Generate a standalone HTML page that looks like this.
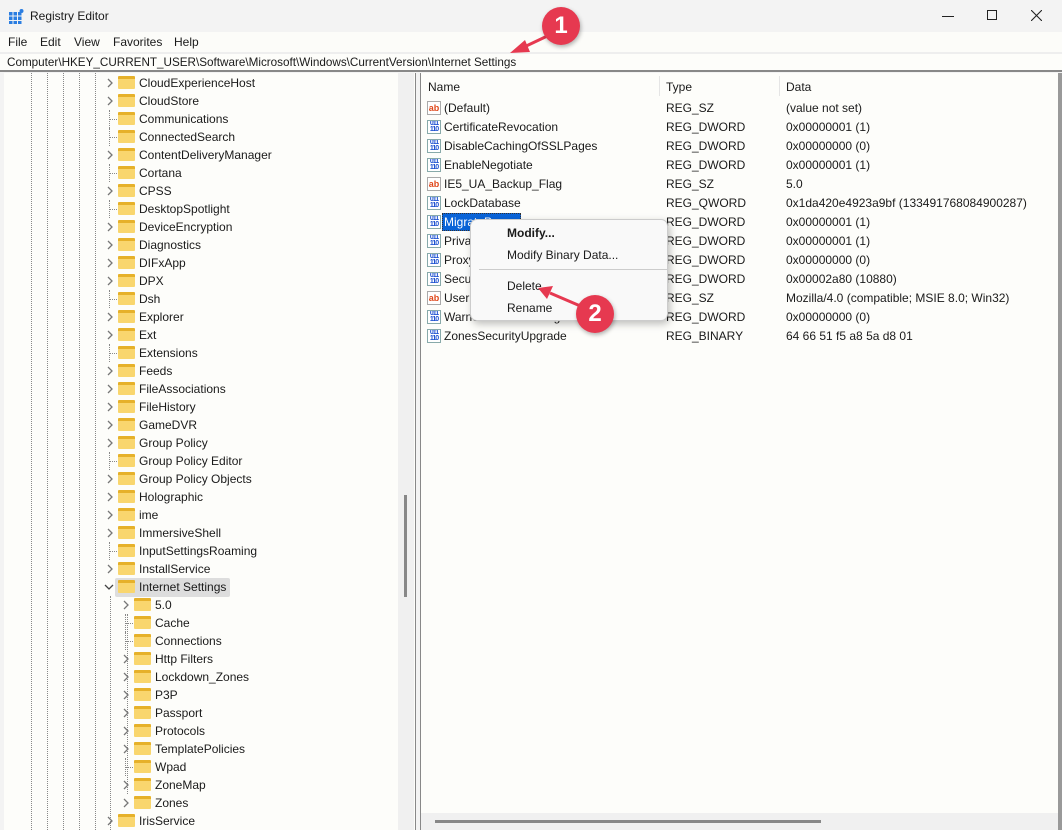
<!DOCTYPE html><html><head><meta charset="utf-8"><style>
*{margin:0;padding:0;box-sizing:border-box}
body{width:1062px;height:830px;overflow:hidden;background:#f3f3f3;font-family:"Liberation Sans",sans-serif;font-size:12px;color:#1a1a1a;position:relative}
.a{position:absolute;white-space:nowrap}
.r{position:absolute;height:18px;line-height:18px;white-space:nowrap}
.f{position:absolute;width:17px;height:13px;background:#f9d66e;border-top:3px solid #e6b12a;border-radius:1px}
.ch{position:absolute}
.dl{position:absolute;border-left:1px dotted #888}
.ic{position:absolute;width:14px;height:14px;border:1px solid #8aa;font-size:7px;line-height:6px;color:#1b4fd0;font-weight:bold;text-align:center;background:#fff;overflow:hidden;letter-spacing:-1px}
.ab{position:absolute;width:14px;height:14px;border:1px solid #aaa;background:#fff;color:#e0471a;font-size:9px;font-weight:bold;line-height:12px;text-align:center}
.badge{position:absolute;width:38px;height:38px;border-radius:50%;background:#e63950;color:#fff;font-weight:bold;font-size:24px;text-align:center;line-height:38px;box-shadow:1px 2px 4px rgba(0,0,0,.3)}
</style></head><body>
<div class="a" style="left:9px;top:9px;width:15px;height:15px">
<svg width="15" height="15"><g fill="#2a7de1"><rect x="0" y="3" width="3.5" height="3.5"/><rect x="4.5" y="3" width="3.5" height="3.5"/><rect x="9" y="3" width="3.5" height="3.5"/><rect x="0" y="7.5" width="3.5" height="3.5"/><rect x="4.5" y="7.5" width="3.5" height="3.5"/><rect x="9" y="7.5" width="3.5" height="3.5"/><rect x="0" y="12" width="3.5" height="3"/><rect x="4.5" y="12" width="3.5" height="3"/><rect x="9" y="12" width="3.5" height="3"/><circle cx="12.5" cy="2" r="2"/></g></svg></div>
<div class="a" style="left:30px;top:9px;font-size:12px">Registry Editor</div>
<div class="a" style="left:942px;top:16px;width:12px;border-top:1px solid #222"></div>
<div class="a" style="left:987px;top:10px;width:10px;height:10px;border:1px solid #222"></div>
<svg class="a" style="left:1031px;top:10px" width="11" height="11"><path d="M0 0L11 11M11 0L0 11" stroke="#222" stroke-width="1.1"/></svg>
<div class="a" style="left:0;top:32px;width:1062px;height:20px;background:#fcfcf9"></div>
<div class="a" style="left:8px;top:35px">File</div><div class="a" style="left:40px;top:35px">Edit</div><div class="a" style="left:74px;top:35px">View</div><div class="a" style="left:113px;top:35px">Favorites</div><div class="a" style="left:174px;top:35px">Help</div>
<div class="a" style="left:0;top:52px;width:1062px;height:20px;background:#fdfdfa;border-top:2px solid #eee;border-bottom:2px solid #888"></div>
<div class="a" style="left:7px;top:56px;font-size:11.7px">Computer\HKEY_CURRENT_USER\Software\Microsoft\Windows\CurrentVersion\Internet Settings</div>
<div class="a" style="left:4px;top:73px;width:411px;height:757px;background:#fdfdfa"></div>
<div class="a" style="left:398px;top:73px;width:16px;height:757px;background:#f0f0f0"></div>
<div class="a" style="left:404px;top:495px;width:3px;height:102px;background:#888"></div>
<div class="a" style="left:415px;top:73px;width:1px;height:757px;background:#888"></div>
<div class="a" style="left:420px;top:73px;width:1px;height:757px;background:#888"></div>
<div class="dl" style="left:31px;top:73px;height:757px"></div><div class="dl" style="left:47px;top:73px;height:757px"></div><div class="dl" style="left:63px;top:73px;height:757px"></div><div class="dl" style="left:79px;top:73px;height:757px"></div><div class="dl" style="left:95px;top:73px;height:757px"></div>
<div class="dl" style="left:110px;top:596px;height:234px"></div>
<div class="dl" style="left:127px;top:614px;height:180px"></div>
<div class="a" style="left:115px;top:578px;width:115px;height:19px;background:#ddd;border-radius:2px"></div>
<div id="tree"></div>
<div class="a" style="left:421px;top:73px;width:637px;height:757px;background:#fdfdfa"></div>
<div class="a" style="left:421px;top:813px;width:637px;height:17px;background:#f0f0f0"></div>
<div class="a" style="left:435px;top:820px;width:386px;height:3px;background:#888"></div>
<div class="a" style="left:1058px;top:73px;width:4px;height:757px;background:#999"></div>
<div class="a" style="left:659px;top:76px;width:1px;height:20px;background:#e5e5e5"></div>
<div class="a" style="left:779px;top:76px;width:1px;height:20px;background:#e5e5e5"></div>
<div class="a" style="left:428px;top:80px">Name</div><div class="a" style="left:666px;top:80px">Type</div><div class="a" style="left:786px;top:80px">Data</div>
<div class="a" style="left:442px;top:213px;width:79px;height:18px;background:#0a64d8;border:1px dotted #333"></div>
<div id="list"></div>
<div class="a" style="left:470px;top:219px;width:198px;height:102px;background:#f9f9f9;border:1px solid #ccc;border-radius:7px;box-shadow:2px 3px 8px rgba(0,0,0,.25)"></div>
<div class="a" style="left:507px;top:226px;font-weight:bold">Modify...</div>
<div class="a" style="left:507px;top:248px">Modify Binary Data...</div>
<div class="a" style="left:479px;top:269px;width:189px;height:1px;background:#ccc"></div>
<div class="a" style="left:507px;top:279px">Delete</div>
<div class="a" style="left:507px;top:301px">Rename</div>
<svg class="a" style="left:0;top:0" width="1062" height="830"><g stroke="#e63950" stroke-width="3" fill="#e63950"><line x1="560" y1="30" x2="522" y2="48"/><polygon points="510,53 525,40 530,52" stroke="none"/><line x1="585" y1="308" x2="550" y2="293"/><polygon points="538,288 553,286 547,299" stroke="none"/></g></svg>
<div class="badge" style="left:542px;top:7px">1</div>
<div class="badge" style="left:576px;top:295px">2</div>
<script>
var t=[["CloudExperienceHost",1],["CloudStore",1],["Communications",0],["ConnectedSearch",0],["ContentDeliveryManager",1],["Cortana",0],["CPSS",1],["DesktopSpotlight",0],["DeviceEncryption",1],["Diagnostics",1],["DIFxApp",1],["DPX",1],["Dsh",0],["Explorer",1],["Ext",1],["Extensions",0],["Feeds",1],["FileAssociations",1],["FileHistory",1],["GameDVR",1],["Group Policy",1],["Group Policy Editor",0],["Group Policy Objects",1],["Holographic",1],["ime",1],["ImmersiveShell",1],["InputSettingsRoaming",0],["InstallService",1],["Internet Settings",2]];
var c=[["5.0",1],["Cache",0],["Connections",0],["Http Filters",1],["Lockdown_Zones",1],["P3P",1],["Passport",1],["Protocols",1],["TemplatePolicies",1],["Wpad",0],["ZoneMap",1],["Zones",1]];
var h="",y=83;
function row(n,e,x){var tp=y-9;
if(e==1)h+='<svg class="ch" style="left:'+(x-12)+'px;top:'+(y-5)+'px" width="8" height="10"><path d="M2 1L6 5L2 9" fill="none" stroke="#777" stroke-width="1.3"/></svg>';
else if(e==2)h+='<svg class="ch" style="left:'+(x-14)+'px;top:'+(y-4)+'px" width="10" height="8"><path d="M1 2L5 6L9 2" fill="none" stroke="#444" stroke-width="1.3"/></svg>';
else h+='<div class="dl" style="left:'+(x-9)+'px;top:'+y+'px;width:8px;height:0;border-left:0;border-top:1px dotted #888"></div><div class="dl" style="left:'+(x-9)+'px;top:'+(y-9)+'px;height:18px"></div>';
h+='<div class="f" style="left:'+x+'px;top:'+(y-7)+'px"></div><div class="r" style="left:'+(x+21)+'px;top:'+tp+'px">'+n+'</div>';y+=18;}
t.forEach(function(a){row(a[0],a[1],118)});
c.forEach(function(a){row(a[0],a[1],134)});
row("IrisService",1,118);
document.getElementById("tree").innerHTML=h;
var L=[["(Default)","REG_SZ","(value not set)",1],["CertificateRevocation","REG_DWORD","0x00000001 (1)"],["DisableCachingOfSSLPages","REG_DWORD","0x00000000 (0)"],["EnableNegotiate","REG_DWORD","0x00000001 (1)"],["IE5_UA_Backup_Flag","REG_SZ","5.0",1],["LockDatabase","REG_QWORD","0x1da420e4923a9bf (133491768084900287)"],["MigrateProxy","REG_DWORD","0x00000001 (1)"],["PrivacyAdvanced","REG_DWORD","0x00000001 (1)"],["ProxyEnable","REG_DWORD","0x00000000 (0)"],["SecureProtocols","REG_DWORD","0x00002a80 (10880)"],["User Agent","REG_SZ","Mozilla/4.0 (compatible; MSIE 8.0; Win32)",1],["WarnonZoneCrossing","REG_DWORD","0x00000000 (0)"],["ZonesSecurityUpgrade","REG_BINARY","64 66 51 f5 a8 5a d8 01"]];
h="";
L.forEach(function(a,i){var cy=108+19*i,tp=cy-9;
h+=a[3]?'<div class="ab" style="left:427px;top:'+(cy-7)+'px">ab</div>':'<div class="ic" style="left:427px;top:'+(cy-7)+'px">011<br>110</div>';
h+='<div class="r" style="left:444px;top:'+tp+'px;'+(i==6?'color:#fff':'')+'">'+a[0]+'</div><div class="r" style="left:666px;top:'+tp+'px">'+a[1]+'</div><div class="r" style="left:786px;top:'+tp+'px">'+a[2]+'</div>';});
document.getElementById("list").innerHTML=h;
</script>
</body></html>
